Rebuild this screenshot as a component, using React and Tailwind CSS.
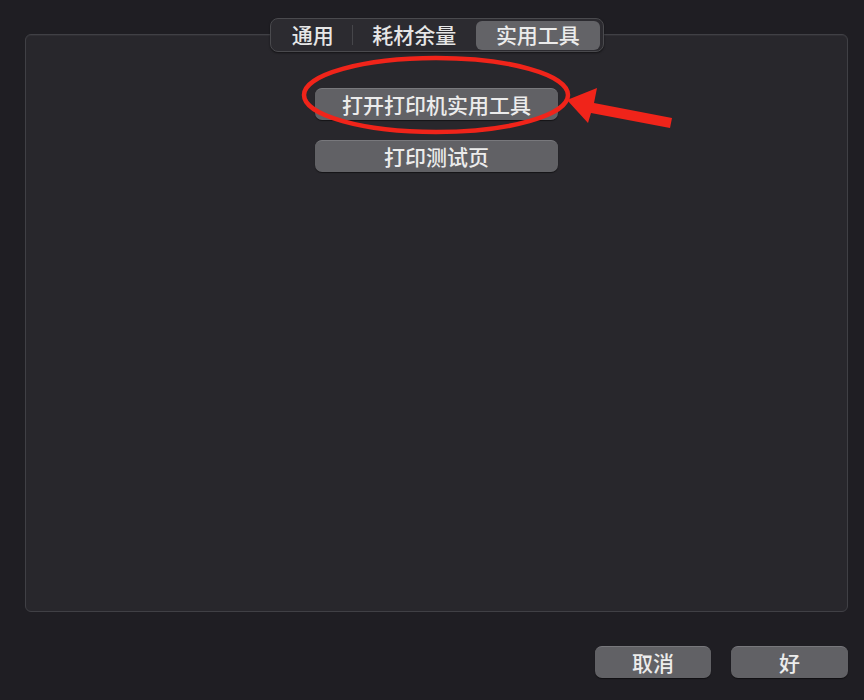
import React from 'react';

const font = { fontFamily: '"Noto Sans CJK SC", "Noto Sans", sans-serif' };

function PushButton({ label, className = '' }) {
  return (
    <button
      className={`h-[32px] rounded-[7px] bg-[#616165] border-t border-[#78787c] shadow-[0_1px_1px_rgba(0,0,0,0.5)] text-[21px] font-medium leading-none text-[#ececec] ${className}`}
    >
      {label}
    </button>
  );
}

function Annotation() {
  // red ellipse + arrow drawn over the dialog
  return (
    <svg className="absolute inset-0 pointer-events-none" width="864" height="700" viewBox="0 0 864 700">
      <ellipse cx="436" cy="95" rx="132" ry="37" fill="none" stroke="#f0241a" strokeWidth="4.5" />
      <polygon
        points="567,100 597,88 594,103 672,118 670,128 591,113 588,123"
        fill="#f0241a"
      />
    </svg>
  );
}

export default function App() {
  return (
    <div className="relative w-[864px] h-[700px] bg-[#1f1e23] overflow-hidden" style={font}>
      <div className="pt-[18px] pl-[25px] pr-[16px]">
        {/* tabs */}
        <div className="relative z-10 flex justify-center -mb-[18px]">
          <div className="flex items-center h-[34px] w-[334px] p-[3px] rounded-[8px] bg-[#2c2b30] border border-[#4a4a4e] shadow-[0_1px_2px_rgba(0,0,0,0.5)] text-[21px] font-medium">
            <div className="w-[79px] text-center text-[#e6e6e6]">通用</div>
            <div className="w-px h-[20px] bg-[#46464a]"></div>
            <div className="w-[123px] text-center text-[#e6e6e6]">耗材余量</div>
            <div className="ml-[1px] w-[124px] h-[29px] rounded-[6px] bg-[#636367] flex items-center justify-center text-[#ececec]">
              实用工具
            </div>
          </div>
        </div>

        {/* panel */}
        <div className="h-[578px] rounded-[6px] bg-[#28272c] border border-[#404045] shadow-[inset_0_1px_0_rgba(255,255,255,0.04)] flex flex-col items-center pt-[53px] gap-[20px]">
          <PushButton label="打开打印机实用工具" className="w-[243px]" />
          <PushButton label="打印测试页" className="w-[243px]" />
        </div>

        {/* footer */}
        <div className="flex justify-end gap-[20px] mt-[34px]">
          <PushButton label="取消" className="w-[116px]" />
          <PushButton label="好" className="w-[117px]" />
        </div>
      </div>
      <Annotation />
    </div>
  );
}
